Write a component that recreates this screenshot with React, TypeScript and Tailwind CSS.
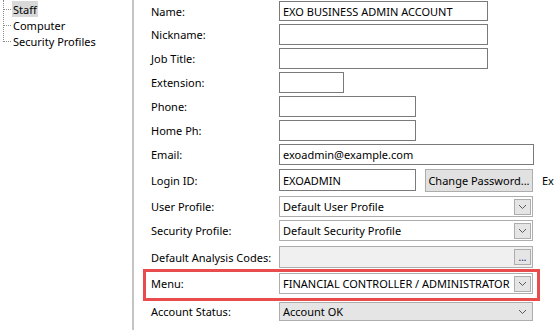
import React from "react"

const font = { fontFamily: '"Noto Sans", "Open Sans", sans-serif' }

function Chevron() {
  return (
    <svg width="9" height="6" viewBox="0 0 9 6" className="block">
      <polyline points="1,1 4.5,4.5 8,1" fill="none" stroke="#5a5a5a" strokeWidth="1" />
    </svg>
  )
}

function TextBox({ value = "", w }: { value?: string; w: string }) {
  return (
    <div className={`${w} h-full border border-[#7a7a7a] bg-white pl-[3px] flex items-center text-black whitespace-nowrap overflow-hidden`}>
      {value}
    </div>
  )
}

function Combo({ value }: { value: string }) {
  return (
    <div className="w-[254px] h-full border border-[#adadad] bg-white pl-[3px] pr-[1px] flex items-center justify-between">
      <span className="whitespace-nowrap">{value}</span>
      <div className="w-[17px] h-[16px] bg-[#e5e5e5] border border-[#adadad] flex items-center justify-center shrink-0">
        <Chevron />
      </div>
    </div>
  )
}

function Row({ label, mt, h, children }: { label: string; mt: string; h: string; children: React.ReactNode }) {
  return (
    <div className={`flex items-center ${mt} ${h}`}>
      <div className="w-[128px] shrink-0 whitespace-nowrap">{label}</div>
      {children}
    </div>
  )
}

export default function App() {
  return (
    <div className="w-[558px] h-[330px] bg-white flex overflow-hidden text-[11px] text-black leading-none" style={font}>
      <div className="w-[134px] h-full border-r-2 border-[#c4c4c4] relative shrink-0">
        <div className="absolute left-[3px] top-0 h-[42px] border-l border-dotted border-[#8a8a8a]" />
        <div className="pt-[1px] pl-[3px]">
          {["Staff", "Computer", "Security Profiles"].map((t, i) => (
            <div key={t} className="flex items-center h-[16px]">
              <div className="w-[8px] border-t border-dotted border-[#8a8a8a]" />
              <div className={`ml-[1px] px-[1px] h-[16px] flex items-center ${i === 0 ? "bg-[#d9d9d9]" : ""}`}>{t}</div>
            </div>
          ))}
        </div>
      </div>

      <div className="flex-1 flex flex-col pl-[17px] min-w-0">
        <Row label="Name:" mt="mt-[1px]" h="h-[20px]">
          <TextBox w="w-[209px]" value="EXO BUSINESS ADMIN ACCOUNT" />
        </Row>
        <Row label="Nickname:" mt="mt-[3px]" h="h-[21px]">
          <TextBox w="w-[209px]" />
        </Row>
        <Row label="Job Title:" mt="mt-[3px]" h="h-[21px]">
          <TextBox w="w-[209px]" />
        </Row>
        <Row label="Extension:" mt="mt-[3px]" h="h-[21px]">
          <TextBox w="w-[65px]" />
        </Row>
        <Row label="Phone:" mt="mt-[3px]" h="h-[21px]">
          <TextBox w="w-[137px]" />
        </Row>
        <Row label="Home Ph:" mt="mt-[3px]" h="h-[21px]">
          <TextBox w="w-[137px]" />
        </Row>
        <Row label="Email:" mt="mt-[3px]" h="h-[21px]">
          <TextBox w="w-[255px]" value="exoadmin@example.com" />
        </Row>
        <Row label="Login ID:" mt="mt-[4px]" h="h-[22px]">
          <TextBox w="w-[137px]" value="EXOADMIN" />
          <button className="ml-[9px] w-[108px] h-[23px] shrink-0 bg-[#e1e1e1] border border-[#adadad] flex items-center justify-center whitespace-nowrap">
            Change Password...
          </button>
          <span className="ml-[9px] whitespace-nowrap">Ex</span>
        </Row>
        <Row label="User Profile:" mt="mt-[5px]" h="h-[21px]">
          <Combo value="Default User Profile" />
        </Row>
        <Row label="Security Profile:" mt="mt-[3px]" h="h-[21px]">
          <Combo value="Default Security Profile" />
        </Row>
        <Row label="Default Analysis Codes:" mt="mt-[5px]" h="h-[22px]">
          <div className="w-[254px] h-full border border-[#adadad] bg-[#f0f0f0] pr-[1px] flex items-center justify-end">
            <div className="w-[17px] h-[16px] bg-[#e5e5e5] border border-[#adadad] flex items-end justify-center pb-[2px] text-[10px] text-[#1a1a6a]">
              ...
            </div>
          </div>
        </Row>
        <div className="mt-[1px] -ml-[8px] w-[397px] h-[32px] border-[3px] border-[#e84c4c] pl-[5px] pt-[1px]">
          <div className="flex items-center h-[21px]">
            <div className="w-[128px] shrink-0 whitespace-nowrap">Menu:</div>
            <Combo value="FINANCIAL CONTROLLER / ADMINISTRATOR" />
          </div>
        </div>
        <Row label="Account Status:" mt="mt-[1px]" h="h-[19px]">
          <div className="w-[254px] h-full border border-[#adadad] bg-[#e5e5e5] pl-[3px] pr-[5px] flex items-center justify-between">
            <span className="whitespace-nowrap">Account OK</span>
            <Chevron />
          </div>
        </Row>
      </div>
    </div>
  )
}
